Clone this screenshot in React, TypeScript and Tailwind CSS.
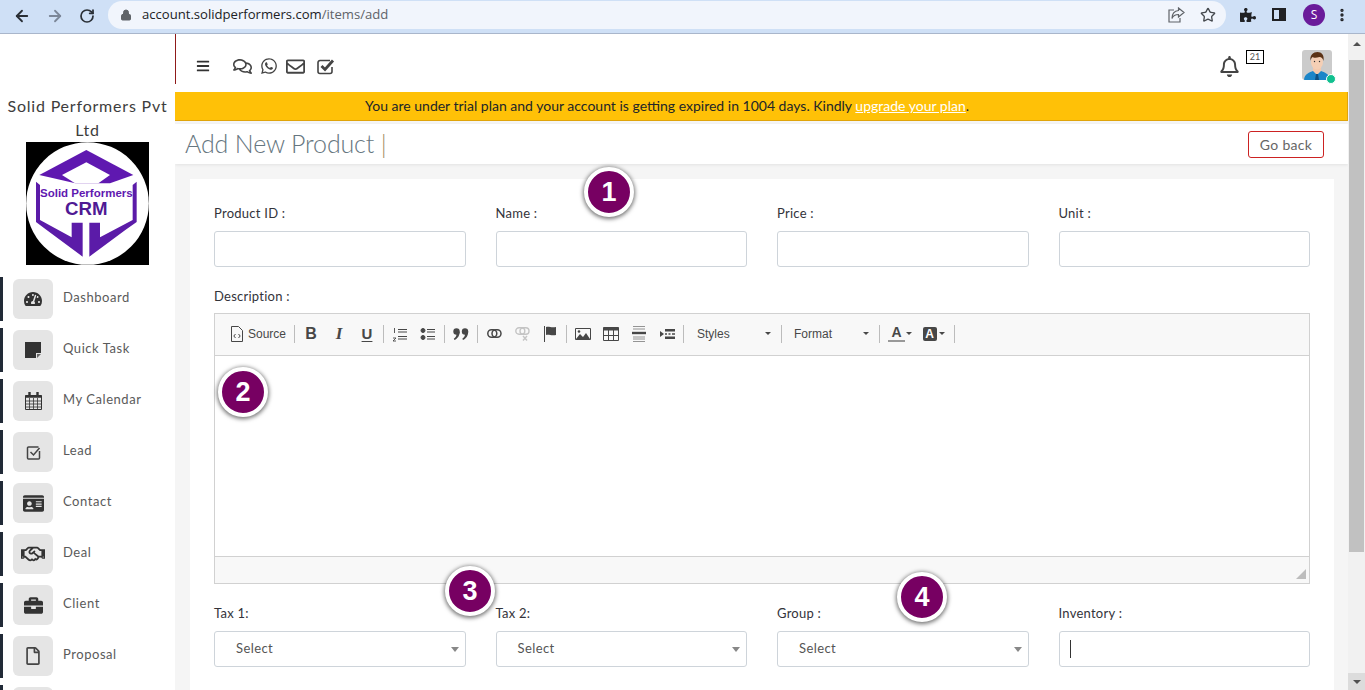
import React from 'react';
import {
  FaBars, FaRegComments, FaWhatsapp, FaRegEnvelope, FaRegBell,
  FaTachometerAlt, FaRegHandshake, FaBriefcase, FaRegFile, FaIdCard, FaPuzzlePiece,
} from 'react-icons/fa';
import { ArrowLeft, ArrowRight, RotateCw, Lock, Star, EllipsisVertical } from 'lucide-react';

const StickyNote = () => (
  <svg width="16" height="16" viewBox="0 0 16 16"><path d="M0 0h16v11h-5v5H0z" fill="#333" /><path d="M12 12h4l-4 4z" fill="#666" /></svg>
);
const CheckBox = () => (
  <svg width="15" height="15" viewBox="0 0 15 15" fill="none" stroke="#444" strokeWidth="1.5"><path d="M13.5 6v7a1 1 0 0 1-1 1h-10a1 1 0 0 1-1-1v-10a1 1 0 0 1 1-1h10" /><path d="M4.5 7l3 3 6-7" /></svg>
);
const Calendar = () => (
  <svg width="17" height="18" viewBox="0 0 17 18" fill="none" stroke="#333"><path d="M.5 3.5h16v14H.5z" /><path d="M.5 4.5h16" strokeWidth="2.5" /><path d="M.5 9h16M.5 12h16M.5 15h16M4.5 6v11M8.5 6v11M12.5 6v11" strokeWidth=".8" /><path d="M4.5 0v4M12.5 0v4" strokeWidth="2.4" /></svg>
);
const BoldCheck = () => (
  <svg width="18" height="17" viewBox="0 0 18 17" fill="none" stroke="#444"><path d="M15 9v4.5a2 2 0 0 1-2 2H3a2 2 0 0 1-2-2v-9a2 2 0 0 1 2-2h10" strokeWidth="1.6" /><path d="M4.5 8l3.5 3.5 8-9" strokeWidth="2.8" /></svg>
);

const menu: [string, React.ReactNode][] = [
  ['Dashboard', <FaTachometerAlt size={18} color="#333" />],
  ['Quick Task', <StickyNote />],
  ['My Calendar', <Calendar />],
  ['Lead', <CheckBox />],
  ['Contact', <FaIdCard size={21} color="#333" />],
  ['Deal', <FaRegHandshake size={24} color="#333" />],
  ['Client', <FaBriefcase size={19} color="#333" />],
  ['Proposal', <FaRegFile size={18} color="#444" />],
  ['', null],
];

function Logo() {
  return (
    <svg width="123" height="123" viewBox="0 0 369 369" className="block">
      <rect width="369" height="369" fill="#000" />
      <circle cx="184.5" cy="184.5" r="184" fill="#fff" />
      <path d="M40 99L181 24 322 99 252 124H148z" fill="#5f18b0" />
      <path d="M108 99L181 61 252 99 217 124H147z" fill="#fff" />
      <path d="M30 119l12 10v105l95 52v-44h33v102L62 264 30 240z" fill="#5b1ba8" />
      <path d="M332 119l-12 10v105l-98 52v-44h-32v102l108-80 34-24z" fill="#5b1ba8" />
      <text x="181" y="164" textAnchor="middle" fontFamily="'Liberation Sans',sans-serif" fontWeight="700" fontSize="33" fill="#5f18b0" textLength="278" lengthAdjust="spacingAndGlyphs">Solid Performers</text>
      <text x="181" y="219" textAnchor="middle" fontFamily="'Liberation Sans',sans-serif" fontWeight="700" fontSize="56" fill="#4f1a94">CRM</text>
    </svg>
  );
}

function Avatar() {
  return (
    <svg width="30" height="30" viewBox="0 0 30 30" className="block rounded-[3px]">
      <rect width="30" height="30" fill="#cbcbcb" />
      <path d="M2 30c0-6 6-8 9-9h8c3 1 9 3 9 9z" fill="#1b85c8" />
      <path d="M11 21l4 4 4-4v-3h-8z" fill="#f3c9ad" />
      <path d="M14 24h2l1 6h-4z" fill="#0f4f80" />
      <ellipse cx="15" cy="12" rx="6" ry="7.5" fill="#f5cfb5" />
      <path d="M8.5 11c-1-6 3-9 7-9s7 3 6 9c-1-3-2-4-4-4-3 1-6 1-7 0-1 1-2 2-2 4z" fill="#5c3317" />
      <circle cx="12.5" cy="11.5" r=".7" fill="#333" /><circle cx="17.5" cy="11.5" r=".7" fill="#333" />
    </svg>
  );
}

const Sep = () => <span className="w-px h-[18px] bg-[#bcbcbc] mx-[2px] shrink-0" />;
const Btn = ({ children }: { children: React.ReactNode }) => (
  <span className="w-[28px] h-[28px] flex items-center justify-center shrink-0">{children}</span>
);
const Glyph = ({ cls, children }: { cls: string; children: string }) => (
  <span className={`font-['Liberation_Sans',Arial,sans-serif] font-bold text-[#474747] leading-none ${cls}`}>{children}</span>
);
const TB = 'h-4 w-4 block';

function Toolbar() {
  const c = '#474747';
  return (
    <div className="h-[42px] bg-[#f8f8f8] border-b border-[#d1d1d1] flex items-center pl-[15px] pb-[2px] font-['Liberation_Sans',Arial,sans-serif] text-[12px] text-[#484848]">
      <span className="flex items-center w-[62px] shrink-0 gap-[4px]">
        <svg width="14" height="16" viewBox="0 0 14 16" fill="none" stroke={c}><path d="M1.5.5h7l4 4v11h-11z" /><path d="M5.5 8L3.8 10l1.7 2M8.5 8l1.7 2-1.7 2" /></svg>
        Source
      </span>
      <Sep />
      <Btn><Glyph cls="text-[16px]">B</Glyph></Btn>
      <Btn><span className="font-['Liberation_Serif',serif] italic font-bold text-[#474747] text-[17px] leading-none">I</span></Btn>
      <Btn><Glyph cls="text-[15px] underline underline-offset-2">U</Glyph></Btn>
      <Sep />
      <Btn><svg className={TB} viewBox="0 0 16 16" stroke={c} fill="none"><path d="M6 3.5h9M6 6h9M6 10.5h9M6 13h9" /><path d="M2.5 2v5M1 12h3l-3 3h3" strokeWidth=".9" /></svg></Btn>
      <Btn><svg className={TB} viewBox="0 0 16 16" stroke={c} fill={c}><circle cx="3" cy="4.5" r="2" /><circle cx="3" cy="11.5" r="2" /><path d="M7 3.5h8M7 6h8M7 10.5h8M7 13h8" fill="none" /></svg></Btn>
      <Sep />
      <Btn><svg width="16" height="12" viewBox="0 0 16 12" fill={c}><circle cx="3.5" cy="3.5" r="3.2" /><path d="M6.7 3.5C6.7 8 4.5 10.5 1.5 12l-.7-1.2C2.5 9.5 3.5 8 3.5 6z" /><circle cx="12" cy="3.5" r="3.2" /><path d="M15.2 3.5c0 4.5-2.2 7-5.2 8.5l-.7-1.2C11 9.5 12 8 12 6z" /></svg></Btn>
      <Sep />
      <Btn><svg width="15" height="9" viewBox="0 0 15 9" fill="none" stroke={c} strokeWidth="1.5"><rect x=".8" y=".8" width="9" height="7.4" rx="3.7" /><rect x="5" y=".8" width="9" height="7.4" rx="3.7" /></svg></Btn>
      <Btn><svg width="15" height="14" viewBox="0 0 15 14" fill="none" stroke="#c4c4c4" strokeWidth="1.4"><rect x=".8" y=".8" width="9" height="6.5" rx="3.2" /><rect x="5" y=".8" width="9" height="6.5" rx="3.2" /><path d="M8 9l4 4.5M12 9l-4 4.5" /></svg></Btn>
      <Btn><svg width="13" height="16" viewBox="0 0 13 16"><path d="M.5 0v16" stroke={c} /><path d="M2 1c3-1 5 1 10 0v8c-5 1-7-1-10 0z" fill={c} /></svg></Btn>
      <Sep />
      <Btn><svg className={TB} viewBox="0 0 16 16" fill="none"><path d="M.5 2.5h15v11H.5z" stroke={c} /><path d="M1 13l4-5 3 3 3-4 4 6z" fill={c} /><circle cx="4" cy="5.5" r="1.3" fill={c} /></svg></Btn>
      <Btn><svg className={TB} viewBox="0 0 16 16" fill="none" stroke={c}><path d="M.5 1.5h15v13H.5z" /><path d="M.5 3h15" strokeWidth="3" /><path d="M.5 9.5h15M5.5 3v11M10.5 3v11" /></svg></Btn>
      <Btn><svg className={TB} viewBox="0 0 16 16" stroke={c} fill="none" strokeWidth=".9"><path d="M2 .5h12M2 3h12M2 11h12M2 13h12M2 15.5h12" stroke="#888" /><path d="M1 7h14" strokeWidth="2.4" /></svg></Btn>
      <Btn><svg className={TB} viewBox="0 0 16 16" fill={c}><path d="M1 5l4 3-4 3z" /><path d="M6 3h10v2.5H6zM6 7.2h2v1.5H6zM9.5 7.2h2v1.5h-2zM13 7.2h3v1.5h-3zM6 10.5h10V13H6z" /></svg></Btn>
      <Sep />
      <span className="w-[93px] shrink-0 flex items-center justify-between pl-[11px] pr-[8px]">Styles<span className="border-x-[3.5px] border-x-transparent border-t-[3.5px] border-t-[#484848]" /></span>
      <Sep />
      <span className="w-[93px] shrink-0 flex items-center justify-between pl-[10px] pr-[8px]">Format<span className="border-x-[3.5px] border-x-transparent border-t-[3.5px] border-t-[#484848]" /></span>
      <Sep />
      <span className="w-[33px] shrink-0 flex items-center justify-end gap-[1px] pr-[3px]">
        <span className="flex flex-col items-center leading-none font-bold text-[14px] text-[#474747] border-b-2 border-[#999] w-[17px] pb-[1px]">A</span>
        <span className="border-x-[3.5px] border-x-transparent border-t-[3.5px] border-t-[#484848]" />
      </span>
      <span className="w-[37px] shrink-0 flex items-center justify-center gap-[2px]">
        <span className="w-[14px] h-[14px] rounded-[2px] bg-[#474747] text-white font-bold text-[12px] leading-[14px] text-center">A</span>
        <span className="border-x-[3.5px] border-x-transparent border-t-[3.5px] border-t-[#484848]" />
      </span>
      <Sep />
    </div>
  );
}

const Field = ({ label, select, caret }: { label: string; select?: boolean; caret?: boolean }) => (
  <div>
    <div className="h-5 leading-5 text-[13px] text-[#33333a] mb-2 tracking-[0.25px]">{label}</div>
    <div className="h-9 bg-white border border-[#ced4da] rounded-[3px] flex items-center justify-between">
      {select && <span className="pl-[21px] text-[13px] text-[#555] tracking-[0.4px]">Select</span>}
      {select && <span className="mr-[6px] border-x-[4px] border-x-transparent border-t-[5px] border-t-[#888]" />}
      {caret && <span className="ml-[10px] w-px h-[18px] bg-[#333]" />}
    </div>
  </div>
);

const Badge = ({ n, cls }: { n: number; cls: string }) => (
  <div className={`absolute z-10 w-[50px] h-[50px] rounded-full bg-[#770062] border-[4px] border-white shadow-[0_1px_4px_1px_rgba(0,0,0,0.55)] flex items-center justify-center text-white font-bold text-[27px] font-['Liberation_Sans',Arial,sans-serif] ${cls}`}>{n}</div>
);

export default function App() {
  return (
    <div className="relative h-[690px] w-[1365px] overflow-hidden flex flex-col font-['Lato','Noto_Sans',sans-serif] bg-white">
      {/* Browser chrome */}
      <div className="h-[34px] shrink-0 bg-[#cfe0f6] border-b border-[#a9b6cb] flex items-center font-['Open_Sans',sans-serif]">
        <div className="w-[108px] shrink-0 flex items-center pl-[13px] gap-[15px] -mt-[1px]">
          <ArrowLeft size={18} color="#2a2f36" strokeWidth={2.4} />
          <ArrowRight size={18} color="#7c8798" strokeWidth={2.4} />
          <RotateCw size={16} color="#2a2f36" strokeWidth={2.6} />
        </div>
        <div className="w-[1118px] h-[28px] -mt-[4px] bg-[#f1f5fc] rounded-full flex items-center pl-[12px]">
          <Lock size={12} color="#5f6368" fill="#5f6368" />
          <span className="ml-[10px] text-[13.1px] text-[#202124]">account.solidperformers.com<span className="text-[#5f6368]">/items/add</span></span>
          <span className="ml-auto flex items-center gap-[15px] pr-[10px]">
            <svg width="17" height="16" viewBox="0 0 17 16" fill="none" stroke="#5f6368" strokeWidth="1.2"><path d="M6 3H1v12h11v-4" /><path d="M10.5 1l5.5 4.5-5.5 4.5V7.500C7 7.500 5 9 4 11.500 4 7 6.500 4 10.500 3.500z" /></svg>
            <Star size={16} color="#45494e" />
          </span>
        </div>
        <div className="flex-1 flex items-center pl-[14px] -mt-[4px]">
          <FaPuzzlePiece size={16} color="#202124" />
          <span className="ml-[16px] w-[14px] h-[13px] border-2 border-[#202124] flex justify-end"><span className="w-[5px] bg-[#202124]" /></span>
          <span className="ml-[17px] w-[22px] h-[22px] rounded-full bg-[#6a1b9a] text-white text-[12px] flex items-center justify-center">S</span>
          <EllipsisVertical size={16} color="#202124" strokeWidth={3} className="ml-[9px]" />
        </div>
      </div>

      <div className="flex flex-1 min-h-0">
        {/* Sidebar */}
        <aside className="w-[175px] shrink-0 bg-white pt-[60px] overflow-hidden">
          <div className="text-[16px] leading-6 text-center text-[#3d3d3d] tracking-[0.8px]">Solid Performers Pvt<br />Ltd</div>
          <div className="ml-[26px]"><Logo /></div>
          <nav className="mt-[12px] flex flex-col gap-[7px]">
            {menu.map(([label, icon], i) => (
              <div key={i} className="h-[44px] shrink-0 border-l-[3px] border-[#212a37] pl-[10px] flex items-center">
                <span className="w-10 h-10 rounded-[6px] bg-[#e5e5e5] flex items-center justify-center shrink-0">{icon}</span>
                <span className="ml-[10px] pb-[2px] text-[13px] text-[#5a5a5a] tracking-[0.55px]">{label}</span>
              </div>
            ))}
          </nav>
        </aside>

        {/* Main column */}
        <main className="flex-1 min-w-0 flex flex-col bg-[#f5f5f5] overflow-hidden">
          <header className="h-[58px] shrink-0 bg-white flex items-center relative pl-[21px]">
            <span className="absolute left-0 top-0 h-[50px] w-px bg-[#8f1a1a]" />
            <div className="flex items-center mt-[6px]">
              <FaBars size={14} color="#333" />
              <div className="flex items-center ml-[23px]">
                <FaRegComments size={19} color="#444" />
                <FaWhatsapp size={18} color="#444" className="ml-[8px]" />
                <FaRegEnvelope size={19} color="#444" className="ml-[8px]" />
                <span className="ml-[12px]"><BoldCheck /></span>
              </div>
            </div>
            <div className="ml-auto self-start mt-[16px] flex items-start pr-[16px]">
              <FaRegBell size={21} color="#444" className="mt-[6px]" />
              <span className="ml-[6px] w-[18px] h-[14px] border border-black text-[9px] leading-[12px] text-center text-[#555]">21</span>
              <div className="relative ml-[38px]">
                <Avatar />
                <span className="absolute -right-[4px] -bottom-[4px] w-[10px] h-[10px] rounded-full bg-[#10c08f] border border-white" />
              </div>
            </div>
          </header>

          <div className="h-[29px] shrink-0 bg-[#ffc107] border-b border-r border-[#e0a40a] flex items-center pl-[190px] pb-[1px] text-[14px] text-[#212529]">
            <span>You are under trial plan and your account is getting expired in 1004 days. Kindly <span className="text-white underline">upgrade your plan</span>.</span>
          </div>

          <div className="mt-[3px] h-[40px] shrink-0 bg-white shadow-[0_1px_3px_rgba(0,0,0,0.08)] flex items-center justify-between pl-[10px] pr-[24px]">
            <span className="text-[25px] font-light text-[#667680] tracking-[-0.15px]">Add New Product <span className="text-[#a08a60]">|</span></span>
            <span className="w-[76px] h-[27px] border border-[#cc2222] rounded-[3px] flex items-center justify-center text-[14px] text-[#666] tracking-[0.3px]">Go back</span>
          </div>

          <section className="mt-[15px] mx-[15px] mr-[14px] flex-1 bg-white px-[24px] pt-[24px]">
            <div className="grid grid-cols-4 gap-x-[30px]">
              <Field label="Product ID :" />
              <Field label="Name :" />
              <Field label="Price :" />
              <Field label="Unit :" />
            </div>
            <div className="mt-[19px] h-5 leading-5 text-[13px] text-[#33333a] mb-[7px] tracking-[0.25px]">Description :</div>
            <div className="h-[271px] border border-[#d1d1d1] flex flex-col">
              <Toolbar />
              <div className="flex-1 bg-white" />
              <div className="h-[27px] bg-[#f8f8f8] border-t border-[#d1d1d1] flex items-end justify-end pr-[3px] pb-[4px]">
                <span className="border-l-[10px] border-l-transparent border-b-[10px] border-b-[#bdbdbd]" />
              </div>
            </div>
            <div className="mt-[19px] grid grid-cols-4 gap-x-[30px]">
              <Field label="Tax 1:" select />
              <Field label="Tax 2:" select />
              <Field label="Group :" select />
              <Field label="Inventory :" caret />
            </div>
          </section>
        </main>

        {/* Page scrollbar */}
        <div className="w-[17px] shrink-0 bg-[#f1f1f1] flex flex-col items-center">
          <div className="h-[17px] w-full flex items-center justify-center shrink-0 mt-[1px]"><span className="border-x-[4px] border-x-transparent border-b-[4px] border-b-[#505050]" /></div>
          <div className="mt-[8px] w-[15px] h-[492px] bg-[#c1c1c1] shrink-0" />
          <div className="flex-1" />
          <div className="h-[17px] w-full flex items-center justify-center shrink-0 bg-[#dcdcdc]"><span className="border-x-[4px] border-x-transparent border-t-[4px] border-t-[#505050]" /></div>
        </div>
      </div>

      <Badge n={1} cls="left-[584px] top-[167px]" />
      <Badge n={2} cls="left-[218px] top-[367px]" />
      <Badge n={3} cls="left-[445px] top-[566px]" />
      <Badge n={4} cls="left-[897px] top-[572px]" />
    </div>
  );
}
